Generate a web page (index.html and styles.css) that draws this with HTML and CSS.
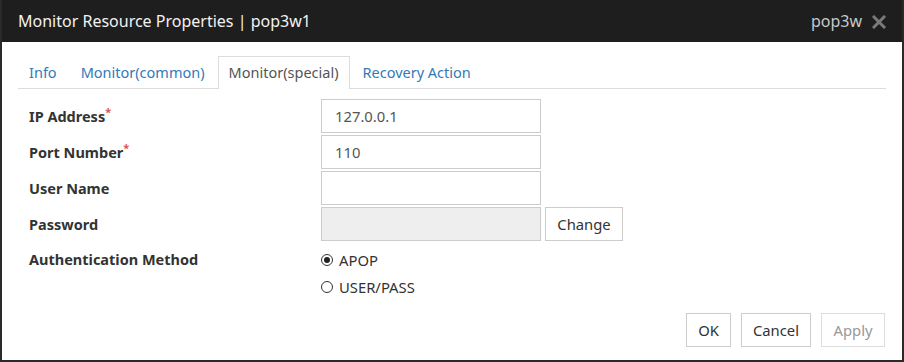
FILE: index.html
```html
<!DOCTYPE html>
<html>
<head>
<meta charset="utf-8">
<link rel="stylesheet" href="styles.css">
</head>
<body>
<div class="dialog">
  <div class="header">
    <span class="title">Monitor Resource Properties | pop3w1</span>
    <span class="hright">pop3w <svg class="close" width="14" height="14" viewBox="0 0 14 14"><path d="M2 2L12 12M12 2L2 12" stroke="#7a7a7a" stroke-width="3" stroke-linecap="square"/></svg></span>
  </div>
  <div class="body">
    <div class="tabs">
      <span class="tab">Info</span>
      <span class="tab">Monitor(common)</span>
      <span class="tab active">Monitor(special)</span>
      <span class="tab">Recovery Action</span>
    </div>
    <div class="form">
      <div class="row"><label class="lbl">IP Address<sup>*</sup></label><div class="input">127.0.0.1</div></div>
      <div class="row"><label class="lbl">Port Number<sup>*</sup></label><div class="input">110</div></div>
      <div class="row"><label class="lbl">User Name</label><div class="input"></div></div>
      <div class="row"><label class="lbl">Password</label><div class="input disabled"></div><button class="btn change">Change</button></div>
      <div class="row radio-row"><label class="lbl">Authentication Method</label>
        <div class="radios">
          <div class="radio"><span class="circle checked"></span>APOP</div>
          <div class="radio"><span class="circle"></span>USER/PASS</div>
        </div>
      </div>
    </div>
    <div class="footer">
      <button class="btn ok">OK</button>
      <button class="btn cancel">Cancel</button>
      <button class="btn apply">Apply</button>
    </div>
  </div>
</div>
</body>
</html>
```
FILE: styles.css
```css
* { box-sizing: border-box; }
html, body { margin: 0; padding: 0; background: #fff; }
body { font-family: "Noto Sans", "Open Sans", sans-serif; color: #333; }
.dialog {
  width: 904px; height: 362px;
  border: 2px solid #2a2a2a;
  border-top: 0;
  display: flex; flex-direction: column;
}
.header {
  height: 42px; background: #1e1e1e;
  display: flex; align-items: center; justify-content: space-between;
  padding: 0 16px 0 16px;
  color: #f2f2f2; font-size: 16px;
}
.hright { color: #c8c8c8; display: flex; align-items: center; gap: 10px; font-size: 16px; }
.close { display: block; margin-top: 1px; }
.body { padding: 15px 16px 0 16px; flex: 1; display: flex; flex-direction: column; }
.tabs {
  display: flex; border-bottom: 1px solid #ddd; height: 32px; align-items: flex-end; gap: 2px;
}
.tab {
  font-size: 14.5px; color: #337ab7; padding: 0 10px; height: 32px; line-height: 30px;
  border: 1px solid transparent; border-bottom: 0;
}
.tab.active { color: #555; border-color: #ddd; background: #fff; margin-bottom: -1px; height: 33px; }
.form { padding-top: 10px; display: flex; flex-direction: column; gap: 2px; }
.row { display: flex; align-items: center; height: 34px; }
.lbl { width: 303px; padding-left: 11px; font-weight: bold; font-size: 14.5px; color: #333; }
.lbl sup { color: #d9534f; font-size: 11px; vertical-align: 6px; line-height: 0; }
.input {
  width: 220px; height: 34px; border: 1px solid #ccc; font-size: 14.8px; padding: 6px 13px; color: #555;
}
.input.disabled { background: #eee; }
.btn {
  font-family: inherit; font-size: 14.8px; color: #333; background: #fff; border: 1px solid #ccc;
  height: 34px; padding: 0 12px; border-radius: 0;
}
.change { margin-left: 4px; width: 78px; padding: 0; }
.radio-row { align-items: flex-start; height: auto; margin-top: 2px; }
.radio-row .lbl { line-height: 27px; padding-top: 1px; }
.radios { display: flex; flex-direction: column; }
.radio { display: flex; align-items: center; height: 27px; font-size: 14.8px; color: #333; padding-top: 2px;}
.circle { width: 12px; height: 12px; border: 1px solid #333; border-radius: 50%; margin-right: 6px; position: relative; }
.circle.checked::after { content: ""; position: absolute; left: 2px; top: 2px; width: 6px; height: 6px; border-radius: 50%; background: #222; }
.footer { display: flex; justify-content: flex-end; gap: 10px; margin-top: auto; padding-bottom: 13px; padding-right: 1px; }
.ok { width: 45px; padding: 0; }
.cancel { width: 70px; padding: 0; }
.apply { width: 64px; padding: 0; color: #999; border-color: #ddd; }
```
